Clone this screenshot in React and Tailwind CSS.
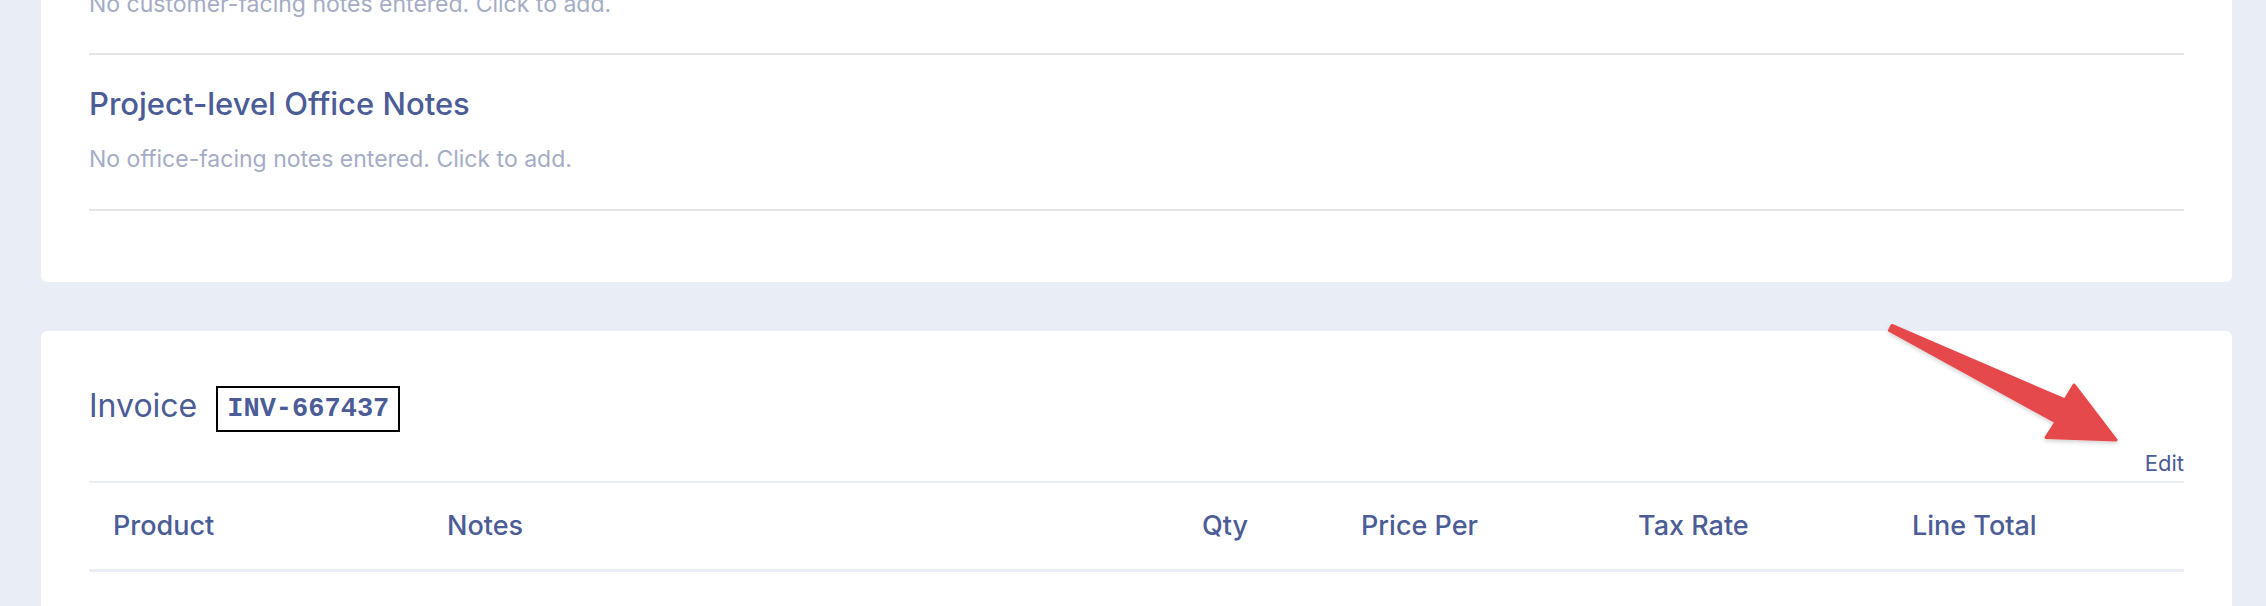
export default function App() {
  const font = { fontFamily: 'Inter, "Noto Sans", sans-serif' };
  return (
    <div className="relative h-[606px] overflow-hidden bg-[#e9eef6] pl-[41px] pr-[34px]" style={font}>
      {/* Notes card */}
      <div className="mt-[-20px] rounded-md bg-white px-[48px] pb-[71px]">
        <div className="border-b-2 border-[#e5e5e5] pt-[8px] pb-[33px]">
          <p className="text-[23px] leading-[32px] text-[#a5acc6]">No customer-facing notes entered. Click to add.</p>
        </div>
        <div className="border-b-2 border-[#e5e5e5] pt-[28px] pb-[34px]">
          <h2 className="text-[31px] font-medium leading-[42px] text-[#4b5c96]">Project-level Office Notes</h2>
          <p className="mt-[18px] text-[23px] leading-[32px] text-[#a5acc6]">No office-facing notes entered. Click to add.</p>
        </div>
      </div>

      {/* Invoice card */}
      <div className="mt-[49px] h-[400px] rounded-md bg-white px-[48px] pt-[55px]">
        <div className="flex items-start gap-[19px]">
          <span className="text-[32px] leading-[40px] text-[#4b5c96]">Invoice</span>
          <span
            className="border-2 border-black px-[9px] text-[27px] font-bold leading-[42px] text-[#4b5c96]"
            style={{ fontFamily: '"Liberation Mono", "Courier New", monospace' }}
          >
            INV-667437
          </span>
        </div>
        <div className="mt-[17px] flex justify-end">
          <a className="text-[22px] leading-[28px] text-[#4b5c96]">Edit</a>
        </div>
        <div className="mt-[4px] grid h-[91px] grid-cols-[334px_755px_159px_277px_274px_1fr] items-center border-t-2 border-b-[3px] border-[#e9edf5] text-[27px] font-medium leading-[36px] text-[#4b5c96]">
          <div className="pl-[24px]">Product</div>
          <div className="pl-[24px]">Notes</div>
          <div className="pl-[24px]">Qty</div>
          <div className="pl-[24px]">Price Per</div>
          <div className="pl-[24px]">Tax Rate</div>
          <div className="pl-[24px]">Line Total</div>
        </div>
      </div>

      {/* Annotation arrow */}
      <svg className="pointer-events-none absolute inset-0" width="2266" height="606" viewBox="0 0 2266 606">
        <defs>
          <filter id="sh" x="-20%" y="-20%" width="140%" height="140%">
            <feDropShadow dx="0" dy="2" stdDeviation="2" floodColor="#000" floodOpacity="0.18" />
          </filter>
        </defs>
        <path
          d="M1892 325.5 L2065 400 L2074 385 L2116 440 L2046 437.5 L2056 422 L1889.5 330.5 Z"
          fill="#e5484b"
          stroke="#e5484b"
          strokeWidth="3"
          strokeLinejoin="round"
          filter="url(#sh)"
        />
      </svg>
    </div>
  );
}
